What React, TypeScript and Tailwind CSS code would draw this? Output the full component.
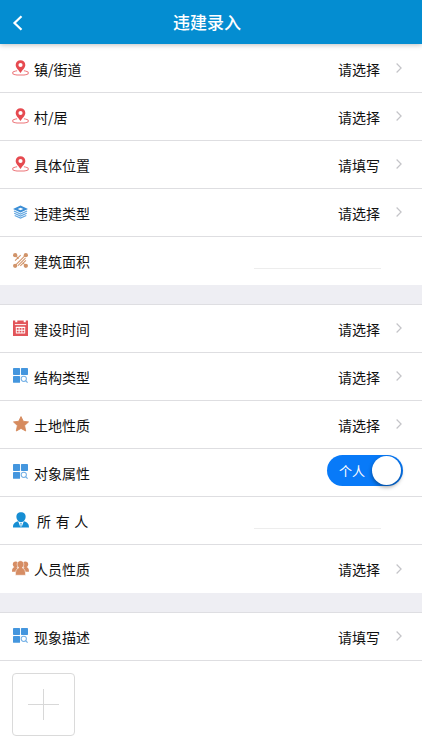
import { useState } from "react";
import type { ReactNode } from "react";

const PinIcon = () => (
  <svg viewBox="0 0 18 16" className="h-4 w-[17px]" fill="none">
    <path d="M5.400 11C2.900 11.300.7 12.200.7 13.200c0 1.300 3.600 2.200 8.300 2.200s8.300-.9 8.300-2.200c0-1-2.200-1.900-4.700-2.200" stroke="#ec7478" strokeWidth="1.100" />
    <path fillRule="evenodd" d="M9-.3a5.100 5.100 0 0 0-5.100 5.100C3.900 7.800 6.900 10 9 13.300c2.100-3.300 5.100-5.500 5.100-8.500A5.100 5.100 0 0 0 9-.3Zm0 2.900a2.200 2.200 0 1 1 0 4.400 2.200 2.200 0 0 1 0-4.400Z" fill="#e64a50" />
  </svg>
);

const LayersIcon = () => (
  <svg viewBox="0 0 16 16" className="h-[15px] w-[15px] overflow-visible" fill="none">
    <path fillRule="evenodd" d="M8 1.600 0 5.300l8 3.700 8-3.700-8-3.700Zm0 2.300 3 1.400-3 1.400-3-1.400 3-1.400Z" fill="#3d8fd6" />
    <path d="M1 7.500 8 10.700l7-3.200M1.300 9.900 8 12.900l6.700-3M1.800 12.200 8 15l6.200-2.800" stroke="#5fa5e0" strokeWidth="1.200" />
  </svg>
);

const AreaIcon = () => (
  <svg viewBox="0 0 16 16" className="h-[15px] w-[15px]" fill="#d1946a">
    <circle cx="2.300" cy="2.300" r="2.300" />
    <circle cx="13.700" cy="2.300" r="2.300" />
    <circle cx="2.300" cy="13.700" r="2.300" />
    <circle cx="13.700" cy="13.700" r="2.300" />
    <path
      d="M2.200 8.200 8.200 2.200M3 12.600 12.600 3M7.800 13.800l6-6M5.300 13.400l8-8M3 3l3 3M10.300 10.300l2.500 2.500"
      stroke="#d1946a"
      strokeWidth="1.100"
      fill="none"
    />
  </svg>
);

const CalendarIcon = () => (
  <svg viewBox="0 0 16 16" className="h-4 w-[15px]" preserveAspectRatio="none">
    <path d="M0 .5h2.400v1.800h2.200V.5h6.800v1.800h2.200V.5H16V16H0Z" fill="#e25459" />
    <path d="M2 4.600h12" stroke="#fff" strokeWidth="1" />
    <rect x="3" y="6.800" width="10" height="6.800" rx="0.500" fill="#fff" />
    <path d="M4 7.900h2v1.800H4zM7 7.900h2v1.800H7zM10 7.900h2v1.800h-2zM4 10.800h2v1.800H4zM7 10.800h2v1.800H7zM10 10.800h2v1.800h-2z" fill="#e25459" />
  </svg>
);

const GridSearchIcon = () => (
  <svg viewBox="0 0 16 16" className="h-[15px] w-[15px]">
    <g fill="#4496de">
      <rect x="0" y="0" width="7.500" height="7.400" rx="0.700" />
      <rect x="8.500" y="0" width="7.500" height="7.400" rx="0.700" />
      <rect x="0" y="8.400" width="7.500" height="7.400" rx="0.700" />
    </g>
    <circle cx="11.500" cy="11.500" r="2.800" fill="#fff" stroke="#73b0e6" strokeWidth="1.100" />
    <path d="m13.400 13.400 2.200 2.200" stroke="#73b0e6" strokeWidth="1.300" />
  </svg>
);

const StarIcon = () => (
  <svg viewBox="0 0 16 16" className="h-4 w-4" fill="#d68b5f" stroke="#d68b5f" strokeLinejoin="round">
    <path d="m8 .6 2.300 4.700 5.200.6-3.900 3.700 1.100 5.400L8 12.400 3.300 15l1.100-5.400L.5 5.900l5.200-.6L8 .6Z" strokeWidth="0.900" />
  </svg>
);

const PersonIcon = () => (
  <svg viewBox="0 0 16 16" className="h-4 w-4" fill="#168ed3">
    <path d="M8 .3C5 .3 3.200 2.300 3.400 5c.2 2.600 1.900 5.200 4.600 5.200s4.400-2.600 4.600-5.200C12.800 2.300 11 .3 8 .3Z" />
    <path d="M5.200 9.300 7.400 15.200l.3-3.200-.5-1h1.600l-.5 1 .3 3.200 2.200-5.900c3.200.9 5.200 2.100 5.200 6.100H0c0-4 2-5.200 5.200-6.100Z" />
  </svg>
);

const PeopleIcon = () => (
  <svg viewBox="0 0 18 16" className="h-4 w-[17px]" fill="#d68d64">
    <circle cx="3.900" cy="4" r="3" />
    <circle cx="14.100" cy="4" r="3" />
    <path d="M0 12c0-3.300 1-4.900 3.700-5.200l2.500 1L5 12ZM18 12c0-3.300-1-4.900-3.700-5.200l-2.500 1L13 12Z" />
    <path
      d="M9 .3c-2.200 0-3.600 1.600-3.500 3.800.1 1.700.8 3 1.700 3.700C4.600 8.800 3.600 11 3.600 15.700h10.800c0-4.700-1-6.900-3.600-7.900.9-.7 1.600-2 1.700-3.700C12.600 1.900 11.200.3 9 .3Z"
      stroke="#fff"
      strokeWidth="0.600"
    />
  </svg>
);

const Chevron = () => (
  <svg viewBox="0 0 8 12" className="mb-px ml-[15px] h-3 w-2" fill="none" stroke="#c4c4c8" strokeWidth="1.200">
    <path d="m1.600 1.500 4.500 4.500-4.500 4.500" />
  </svg>
);

const Label = ({ icon, children }: { icon: ReactNode; children: ReactNode }) => (
  <>
    <span className="mb-0.5 flex w-[15px] shrink-0 justify-center">
      <span className="shrink-0">{icon}</span>
    </span>
    <span className="ml-1.5">{children}</span>
  </>
);

const rowClass = "flex h-12 w-full items-center pr-[19px] pl-[13px] text-left";

const SelectRow = ({ icon, label, value = "请选择" }: { icon: ReactNode; label: string; value?: string }) => (
  <button type="button" className={rowClass}>
    <Label icon={icon}>{label}</Label>
    <span className="ml-auto">{value}</span>
    <Chevron />
  </button>
);

const InputRow = ({ icon, label, name }: { icon: ReactNode; label: ReactNode; name: string }) => (
  <label className={rowClass}>
    <Label icon={icon}>{label}</Label>
    <input
      type="text"
      name={name}
      className="mb-2 mr-[22px] ml-auto h-6 w-[127px] border-b border-[#ededed] bg-transparent text-right outline-none"
    />
  </label>
);

const Section = ({ children }: { children: ReactNode }) => (
  <section className="divide-y divide-[#dedee1] bg-white">{children}</section>
);

const Gap = () => <div className="h-5 border-b border-[#dedee2] bg-[#eeeef3]" />;

const App = () => {
  const [personal, setPersonal] = useState(true);

  return (
    <div className="min-h-screen bg-white font-['Noto_Sans_CJK_SC',sans-serif] text-sm text-[#111]">
      <header className="relative grid grid-cols-[44px_1fr_52px] items-center bg-[#048dd1] text-white shadow-[0_1px_5px_rgba(0,0,0,0.25)]">
        <button type="button" aria-label="返回" className="flex h-11 items-center pl-3">
          <svg viewBox="0 0 12 18" className="mt-0.5 h-[18px] w-3" fill="none" stroke="currentColor" strokeWidth="2.200">
            <path d="M9.500 2.300 2.500 9l7 6.700" />
          </svg>
        </button>
        <h1 className="text-center text-[17px] font-medium">违建录入</h1>
      </header>

      <main className="pt-px">
        <Section>
          <SelectRow icon={<PinIcon />} label="镇/街道" />
          <SelectRow icon={<PinIcon />} label="村/居" />
          <SelectRow icon={<PinIcon />} label="具体位置" value="请填写" />
          <SelectRow icon={<LayersIcon />} label="违建类型" />
          <InputRow icon={<AreaIcon />} label="建筑面积" name="area" />
        </Section>
        <Gap />
        <Section>
          <SelectRow icon={<CalendarIcon />} label="建设时间" />
          <SelectRow icon={<GridSearchIcon />} label="结构类型" />
          <SelectRow icon={<StarIcon />} label="土地性质" />
          <label className={rowClass}>
            <Label icon={<GridSearchIcon />}>对象属性</Label>
            <span className="relative mb-1 ml-auto h-[31px] w-[76px]">
              <input
                type="checkbox"
                role="switch"
                checked={personal}
                onChange={(e) => setPersonal(e.target.checked)}
                className="peer h-full w-full appearance-none rounded-full bg-[#b5b5ba] checked:bg-[#087af8]"
              />
              <span className="absolute top-[7px] left-3 text-[13px] text-white">{personal ? "个人" : "单位"}</span>
              <span className="absolute top-px left-px h-[29px] w-[29px] rounded-full bg-white shadow-[0_2px_4px_rgba(0,0,0,0.4)] peer-checked:right-0.5 peer-checked:left-auto" />
            </span>
          </label>
          <InputRow icon={<PersonIcon />} label={<span className="pl-[3px]">所{"\u2004"}有{"\u2004"}人</span>} name="owner" />
          <SelectRow icon={<PeopleIcon />} label="人员性质" />
        </Section>
        <Gap />
        <Section>
          <SelectRow icon={<GridSearchIcon />} label="现象描述" value="请填写" />
          <div className="px-3 pt-3 pb-2">
            <button
              type="button"
              aria-label="添加图片"
              className="flex h-[63px] w-[63px] items-center justify-center rounded-[4px] border border-[#dadada]"
            >
              <svg viewBox="0 0 31 31" className="h-[31px] w-[31px]" stroke="#d8d8d8" strokeWidth="1">
                <path d="M15.500 0v31M0 15.500h31" />
              </svg>
            </button>
          </div>
        </Section>
      </main>
    </div>
  );
};

export default App;
